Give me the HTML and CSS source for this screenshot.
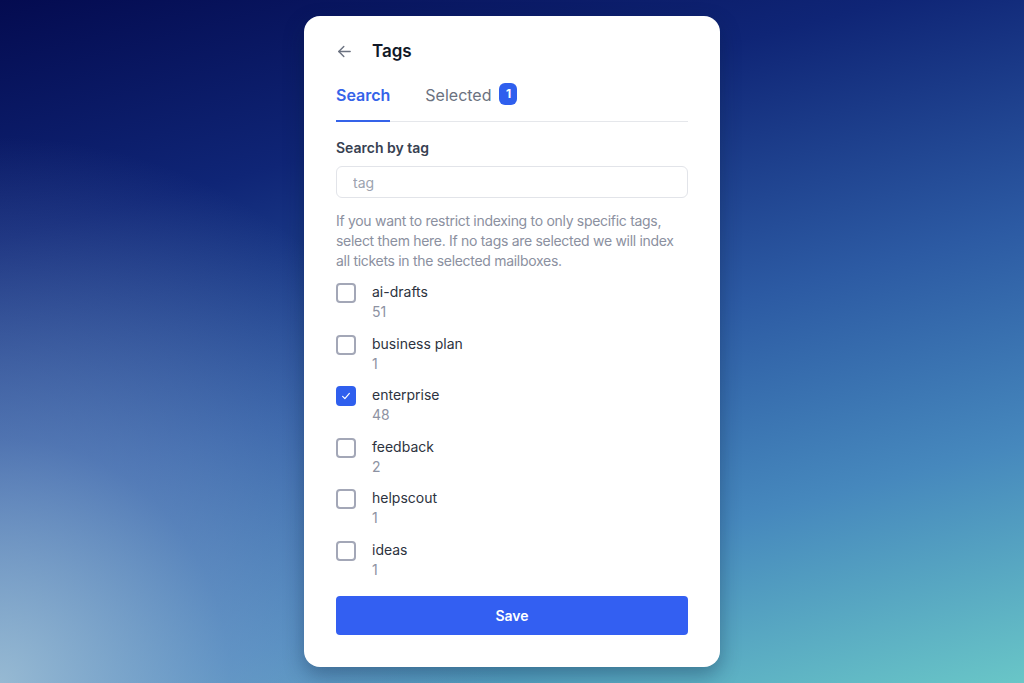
FILE: index.html
```html
<!DOCTYPE html>
<html lang="en">
<head>
<meta charset="utf-8">
<title>Tags</title>
<link rel="stylesheet" href="styles.css">
</head>
<body>
<main class="stage">
  <section class="card">
    <header class="head">
      <button class="back" aria-label="Back">
        <svg width="17" height="17" viewBox="0 0 24 24" fill="none" stroke="currentColor" stroke-width="2" stroke-linecap="round" stroke-linejoin="round"><path d="M20 12H4"/><path d="M11 19l-7-7 7-7"/></svg>
      </button>
      <h1 class="title">Tags</h1>
    </header>
    <nav class="tabs">
      <span class="tab active">Search</span>
      <span class="tab">Selected <span class="badge">1</span></span>
    </nav>
    <label class="field-label" for="tag">Search by tag</label>
    <input id="tag" class="input" type="text" placeholder="tag">
    <p class="help">If you want to restrict indexing to only specific tags, select them here. If no tags are selected we will index all tickets in the selected mailboxes.</p>
    <ul class="list">
      <li class="row"><span class="box"></span><span class="meta"><span class="name">ai-drafts</span><span class="count">51</span></span></li>
      <li class="row"><span class="box"></span><span class="meta"><span class="name">business plan</span><span class="count">1</span></span></li>
      <li class="row"><span class="box checked"><svg width="12" height="12" viewBox="0 0 16 16" fill="none" stroke="#fff" stroke-width="1.6" stroke-linecap="round" stroke-linejoin="round"><path d="M3.5 8.5l3 3 6-7"/></svg></span><span class="meta"><span class="name">enterprise</span><span class="count">48</span></span></li>
      <li class="row"><span class="box"></span><span class="meta"><span class="name">feedback</span><span class="count">2</span></span></li>
      <li class="row"><span class="box"></span><span class="meta"><span class="name">helpscout</span><span class="count">1</span></span></li>
      <li class="row"><span class="box"></span><span class="meta"><span class="name">ideas</span><span class="count">1</span></span></li>
    </ul>
    <button class="save">Save</button>
  </section>
</main>
</body>
</html>
```

FILE: styles.css
```css
* { box-sizing: border-box; }
html, body { margin: 0; height: 100%; }
body {
  font-family: Inter, "Noto Sans", sans-serif;
  background:
    radial-gradient(ellipse 50% 80% at 0% 100%, rgba(165,195,215,0.85) 0%, rgba(130,160,205,0.45) 45%, rgba(120,150,200,0) 100%),
    linear-gradient(165deg, #040b50 0%, #0f2576 25%, #2c5aa3 52%, #4688bd 75%, #69c6c7 100%);
  overflow: hidden;
}
.stage {
  height: 683px;
  display: flex;
  justify-content: center;
  align-items: flex-start;
  padding-top: 16px;
}
.card {
  width: 416px;
  height: 651px;
  background: #fff;
  border-radius: 16px;
  padding: 25px 32px 32px;
  display: flex;
  flex-direction: column;
  box-shadow: 0 8px 20px rgba(10, 30, 60, 0.35);
}
.head {
  display: flex;
  align-items: center;
  gap: 19px;
  height: 20px;
}
.back {
  border: 0;
  background: none;
  padding: 0;
  color: #6b7280;
  display: flex;
  width: 17px;
  height: 17px;
}
.title {
  margin: 0;
  font-size: 17px;
  font-weight: 600;
  color: #111827;
  line-height: 20px;
}
.tabs {
  display: flex;
  gap: 35px;
  margin-top: 24px;
  border-bottom: 1px solid #e5e7eb;
}
.tab {
  display: flex;
  align-items: center;
  gap: 8px;
  font-size: 16px;
  line-height: 20px;
  color: #6b7280;
  padding-bottom: 15px;
  border-bottom: 2px solid transparent;
  margin-bottom: -1px;
}
.tab.active {
  color: #3563e9;
  font-weight: 600;
  border-bottom-color: #3563e9;
}
.badge {
  display: inline-flex;
  align-items: center;
  justify-content: center;
  width: 18px;
  height: 22px;
  border-radius: 6px;
  background: #2f5fee;
  color: #fff;
  font-size: 12px;
  font-weight: 700;
  margin-top: -2px;
}
.field-label {
  margin-top: 16px;
  font-size: 14px;
  line-height: 20px;
  font-weight: 600;
  color: #374151;
}
.input {
  margin-top: 8px;
  height: 33px;
  border: 1px solid #e2e4e9;
  border-radius: 6px;
  padding: 0 16px;
  font-family: inherit;
  font-size: 14px;
  color: #374151;
  outline: none;
}
.input::placeholder { color: #9ca3af; }
.help {
  margin: 13px 0 0;
  font-size: 14px;
  line-height: 20px;
  letter-spacing: -0.3px;
  color: #8b90a0;
}
.list {
  list-style: none;
  margin: 11px 0 0;
  padding: 0;
  display: flex;
  flex-direction: column;
  gap: 11.6px;
}
.row {
  display: flex;
  gap: 16px;
}
.box {
  width: 20px;
  height: 20px;
  margin-top: 1px;
  border: 2px solid #a3a7b7;
  border-radius: 4px;
  display: flex;
  align-items: center;
  justify-content: center;
  flex: none;
}
.box.checked {
  background: #2f5fee;
  border-color: #2f5fee;
}
.meta {
  display: flex;
  flex-direction: column;
}
.name {
  font-size: 14px;
  line-height: 20px;
  color: #2d3340;
}
.count {
  font-size: 14px;
  line-height: 20px;
  color: #8d92a2;
}
.save {
  margin-top: 16px;
  height: 40px;
  border: 0;
  border-radius: 4px;
  background: #335ff2;
  color: #fff;
  font-family: inherit;
  font-size: 14px;
  font-weight: 600;
}
```
